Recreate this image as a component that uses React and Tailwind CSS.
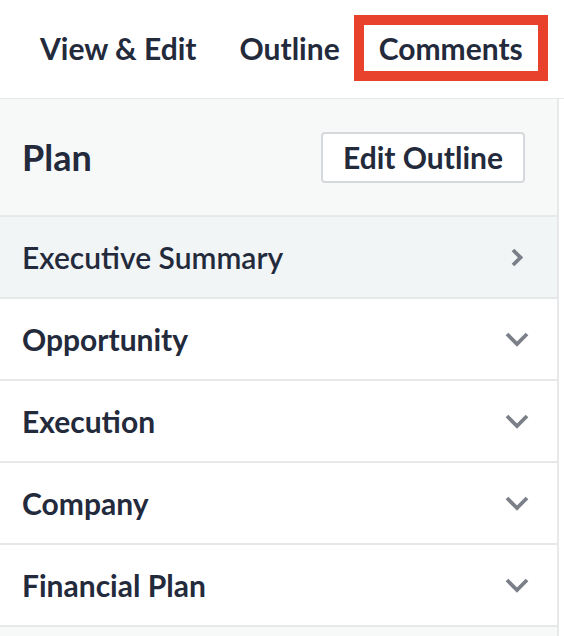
const sections = ["Opportunity", "Execution", "Company", "Financial Plan"];

function Chevron({ open }) {
  return (
    <span className="flex w-[24px] justify-center text-[#7a7f88]">
      {open ? (
        <svg width="12" height="19" viewBox="0 0 12 19" fill="none" stroke="currentColor" strokeWidth="3.8" strokeLinejoin="miter">
          <polyline points="2,2 9.5,9.5 2,17" />
        </svg>
      ) : (
        <svg width="24" height="15" viewBox="0 0 24 15" fill="none" stroke="currentColor" strokeWidth="3.8" strokeLinejoin="miter">
          <polyline points="2,2 12,12 22,2" />
        </svg>
      )}
    </span>
  );
}

function Tabs() {
  return (
    <header className="flex h-[99px] items-start border-b border-[#e6e8ea] bg-white pt-[15px]">
      <nav className="flex items-center pl-[40px]">
        <button className="h-[66px] text-[30px] font-bold text-[#232a3c]">View &amp; Edit</button>
        <button className="ml-[43px] h-[66px] text-[30px] font-bold text-[#232a3c]">Outline</button>
        <button className="ml-[14px] h-[66px] w-[194px] border-[10px] border-[#e8412c] text-[30px] font-bold text-[#232a3c]">
          Comments
        </button>
      </nav>
    </header>
  );
}

function Row({ label, open, active }) {
  return (
    <div
      className={
        "flex h-[82px] items-center justify-between border-b-2 border-[#e6e8ea] pl-[22px] pr-[28px] " +
        (active ? "bg-[#f2f5f5]" : "bg-white")
      }
    >
      <span className={"text-[30px] text-[#232a3c] " + (active ? "font-semibold" : "font-bold")}>{label}</span>
      <Chevron open={open} />
    </div>
  );
}

export default function App() {
  return (
    <div className="h-[636px] w-[564px] overflow-hidden bg-white font-['Lato',sans-serif]">
      <Tabs />
      <div className="h-[537px] w-[559px] border-r-2 border-[#e6e8ea] bg-[#f7f9f9]">
        <div className="flex h-[118px] items-center justify-between border-b-2 border-[#e6e8ea] pl-[22px] pr-[32px]">
          <h2 className="text-[36px] font-bold text-[#232a3c]">Plan</h2>
          <button className="h-[51px] w-[204px] rounded-[4px] border-2 border-[#d6d9dc] bg-white text-[30px] font-bold text-[#232a3c]">
            Edit Outline
          </button>
        </div>
        <Row label="Executive Summary" open active />
        {sections.map((s) => (
          <Row key={s} label={s} />
        ))}
      </div>
    </div>
  );
}
